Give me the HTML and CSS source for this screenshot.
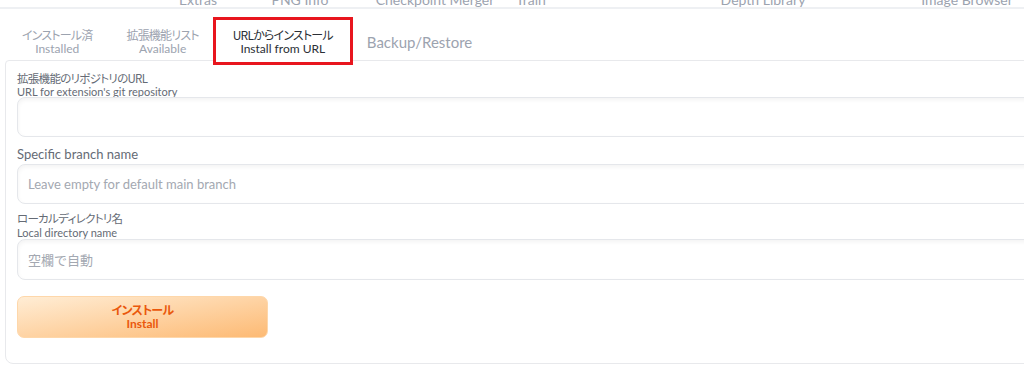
FILE: index.html
```html
<!DOCTYPE html>
<html lang="ja">
<head>
<meta charset="utf-8">
<title>Extensions - Install from URL</title>
<link rel="stylesheet" href="styles.css">
</head>
<body>
<nav class="topnav">
  <span class="spacer s1"></span>
  <span class="navitem">Extras</span>
  <span class="navitem">PNG Info</span>
  <span class="navitem">Checkpoint Merger</span>
  <span class="navitem">Train</span>
  <span class="spacer"></span>
  <span class="navitem">Depth Library</span>
  <span class="spacer"></span>
  <span class="navitem">Image Browser</span>
</nav>

<div class="subtabs">
  <button class="tab"><span class="jp">インストール済</span><span>Installed</span></button>
  <button class="tab"><span class="jp">拡張機能リスト</span><span>Available</span></button>
  <button class="tab active"><span class="jp">URLからインストール</span><span>Install from URL</span></button>
  <button class="tab single">Backup/Restore</button>
</div>

<section class="panel">
  <div class="field">
    <label class="label small"><span class="jp">拡張機能のリポジトリのURL</span><span>URL for extension's git repository</span></label>
    <input class="input" type="text">
  </div>
  <div class="field">
    <label class="label big">Specific branch name</label>
    <input class="input" type="text" placeholder="Leave empty for default main branch">
  </div>
  <div class="field">
    <label class="label small tight"><span class="jp">ローカルディレクトリ名</span><span>Local directory name</span></label>
    <input class="input tall" type="text" placeholder="空欄で自動">
  </div>
  <button class="primary"><span class="jp">インストール</span><span>Install</span></button>
</section>
</body>
</html>
```

FILE: styles.css
```css
html, body {
  margin: 0;
  padding: 0;
  background: #ffffff;
  overflow: hidden;
}

body {
  font-family: "Lato", "Noto Sans CJK JP", sans-serif;
  color: #374151;
  width: 1024px;
  height: 370px;
}

.jp {
  font-family: "Noto Sans CJK JP", sans-serif;
  font-feature-settings: "palt";
  letter-spacing: -0.7px;
}

/* top navigation (scrolled, mostly off-screen) */
.topnav {
  display: grid;
  grid-template-columns: 150px 96px 108px 162px 28px 159px 120px 84px 120px;
  grid-template-rows: 7px;
  height: 7px;
  overflow: hidden;
  border-bottom: 2px solid #eef0f3;
}

.navitem {
  align-self: end;
  text-align: center;
  white-space: nowrap;
  font-size: 14px;
  line-height: 16px;
  color: #9ca3af;
  margin-bottom: -1px;
}

/* sub tabs */
.subtabs {
  display: flex;
  align-items: flex-end;
  padding: 11px 0 0 5px;
}

.tab {
  display: flex;
  flex-direction: column;
  align-items: center;
  justify-content: center;
  height: 42px;
  padding: 0 16px;
  border: 1px solid transparent;
  border-bottom: none;
  background: transparent;
  font-family: "Lato", "Noto Sans CJK JP", sans-serif;
  font-size: 12px;
  line-height: 14px;
  color: #9ca3af;
  cursor: pointer;
}

.tab .jp {
  font-size: 12px;
  letter-spacing: -0.8px;
}

.tab.single {
  font-size: 15px;
  color: #9ca3af;
}

.tab.active {
  position: relative;
  z-index: 1;
  background: #ffffff;
  color: #2b2f36;
  outline: 3px solid #e8161e;
}

/* panel */
.panel {
  margin: -2px -40px 0 5px;
  padding: 11px 11px 25px 11px;
  border: 1px solid #e8e9ec;
  border-radius: 4px 8px 8px 8px;
  display: flex;
  flex-direction: column;
  gap: 8px;
}

.field {
  display: flex;
  flex-direction: column;
}

.label {
  display: flex;
  flex-direction: column;
  color: #656b75;
}

.label.small {
  font-size: 11px;
  line-height: 13px;
  margin-bottom: -1px;
}

.label.small .jp {
  font-size: 11.5px;
}

.label.small.tight {
  line-height: 13.5px;
  margin-bottom: 0;
}

.label.big {
  font-size: 13px;
  line-height: 19px;
}

.input {
  box-sizing: border-box;
  height: 40px;
  width: 100%;
  border: 1px solid #e5e7eb;
  border-radius: 8px;
  box-shadow: inset 0 2px 4px rgba(0, 0, 0, 0.05);
  background: #ffffff;
  padding: 0 10px;
  font-family: "Lato", "Noto Sans CJK JP", sans-serif;
  font-size: 13px;
  color: #374151;
  outline: none;
}

.input.tall {
  height: 41px;
}

.input::placeholder {
  color: #a3a8b1;
}

.primary {
  margin-top: 8px;
  width: 251px;
  height: 42px;
  display: flex;
  flex-direction: column;
  align-items: center;
  justify-content: center;
  border: 1px solid #fed7aa;
  border-radius: 7px;
  background: linear-gradient(to bottom right, #ffedd5, #fdba74);
  color: #ea580c;
  font-family: "Lato", "Noto Sans CJK JP", sans-serif;
  font-size: 12px;
  font-weight: 700;
  line-height: 14px;
  cursor: pointer;
}

.primary .jp {
  font-weight: 700;
  font-size: 12px;
}
```
